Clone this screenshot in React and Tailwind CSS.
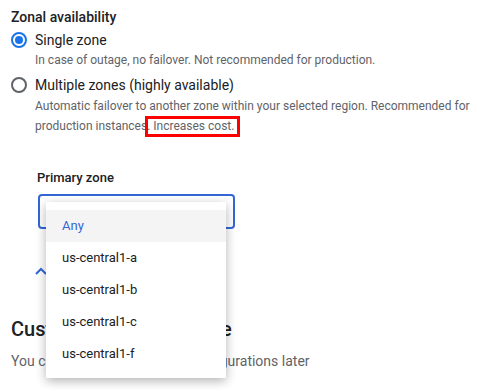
import React from "react";

const zones = ["Any", "us-central1-a", "us-central1-b", "us-central1-c", "us-central1-f"];

function Radio({ checked }) {
  return (
    <span
      className={
        "flex h-4 w-4 shrink-0 items-center justify-center rounded-full border-2 " +
        (checked ? "border-[#1a73e8]" : "border-[#5f6368]")
      }
    >
      {checked && <span className="h-2 w-2 rounded-full bg-[#1a73e8]" />}
    </span>
  );
}

export default function App() {
  return (
    <div className="relative h-[390px] w-[480px] overflow-hidden bg-white pl-[11px] pt-[7px] font-['Roboto',sans-serif] text-[#202124]">
      <div className="text-[14px] font-medium leading-5">Zonal availability</div>

      {/* Single zone */}
      <div className="mt-[3px] flex items-center gap-2 leading-5">
        <Radio checked />
        <span className="text-[14px]">Single zone</span>
      </div>
      <div className="pl-6 text-[12px] leading-5 text-[#5f6368]">
        In case of outage, no failover. Not recommended for production.
      </div>

      {/* Multiple zones */}
      <div className="mt-[5px] flex items-center gap-2 leading-5">
        <Radio />
        <span className="text-[14px]">Multiple zones (highly available)</span>
      </div>
      <div className="mt-px w-[464px] pl-6 text-[12px] leading-5 text-[#5f6368]">
        Automatic failover to another zone within your selected region. Recommended for production instances.{" "}
        <span className="relative">
          Increases cost.
          <span className="absolute -left-[8px] -right-[6px] -top-[3px] -bottom-[4px] border-[3px] border-[#f00]" />
        </span>
      </div>

      {/* Primary zone */}
      <div className="mt-[32px] pl-[26px]">
        <div className="text-[13px] font-medium leading-5">Primary zone</div>
        <div className="ml-px mt-[6px] h-[35px] w-[197px] rounded-[4px] border-2 border-[#3367d6]" />
        <div className="ml-[-2px] mt-[38px] h-3 w-3 text-[#3367d6]">
          <svg viewBox="0 0 12 8" width="12" height="8" fill="none" stroke="currentColor" strokeWidth="2">
            <path d="M1 7l5-5 5 5" />
          </svg>
        </div>
      </div>

      {/* Customize section */}
      <div className="mt-[36px] text-[20px] font-medium leading-7">Customize your instance</div>
      <div className="mt-[8px] text-[14px] leading-5 text-[#5f6368]">
        You can customize instance configurations later
      </div>

      {/* Dropdown menu */}
      <div className="absolute left-[46px] top-[202px] w-[180px] bg-white py-2 shadow-[0_3px_10px_rgba(0,0,0,0.3)]">
        {zones.map((z, i) => (
          <div
            key={z}
            className={
              "flex h-8 items-center pl-4 text-[13px] " +
              (i === 0 ? "bg-[#f4f4f4] text-[#3367d6]" : "text-[#202124]")
            }
          >
            {z}
          </div>
        ))}
      </div>
    </div>
  );
}
